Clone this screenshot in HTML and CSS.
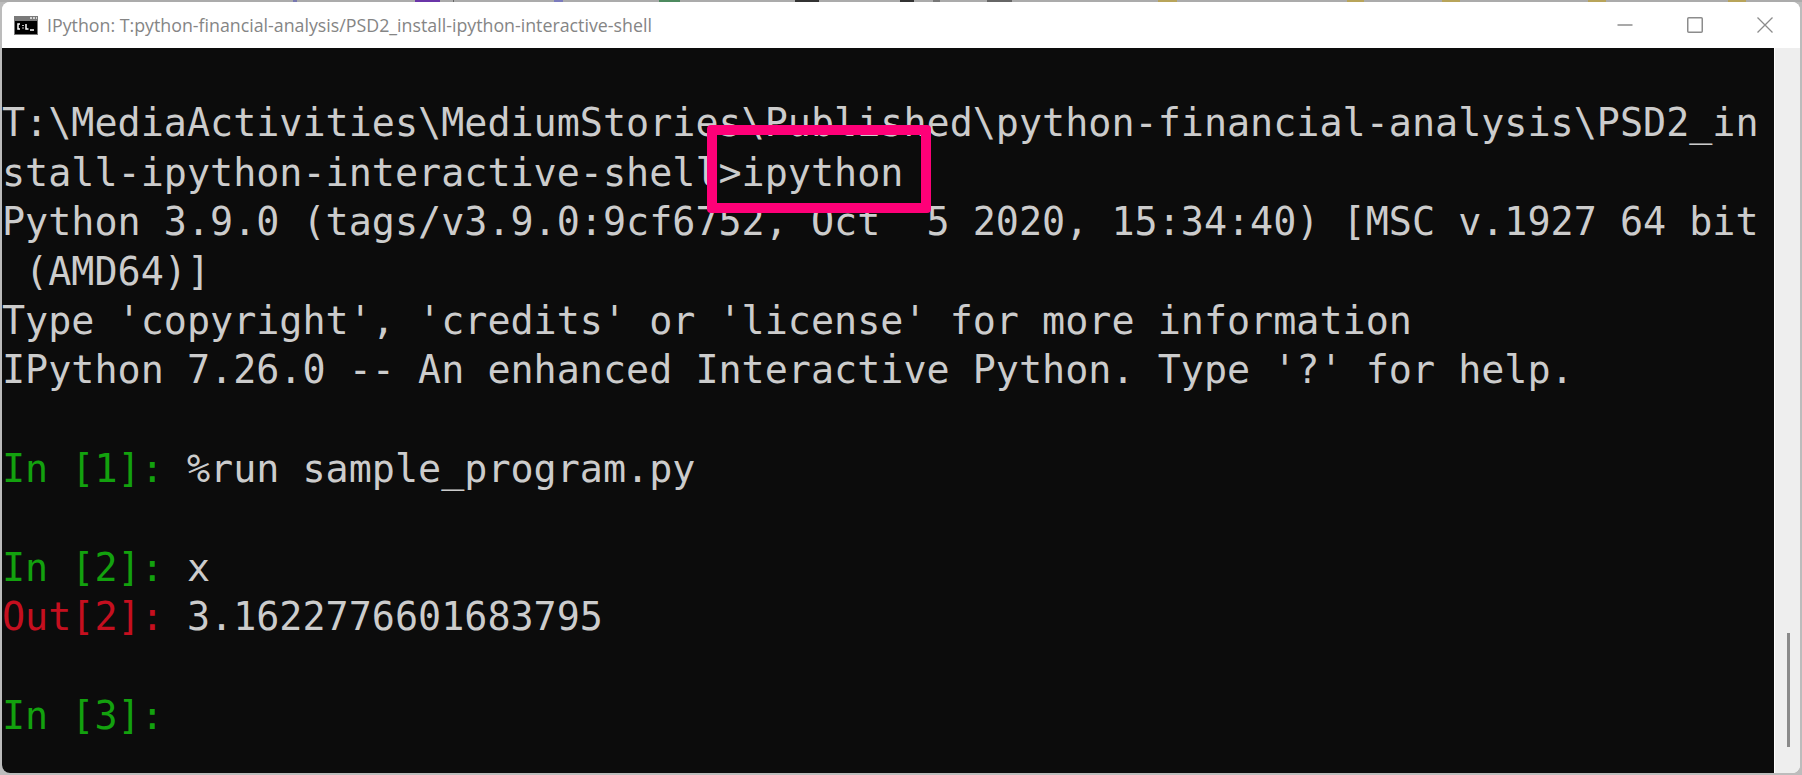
FILE: index.html
```html
<!DOCTYPE html>
<html lang="en">
<head>
<meta charset="utf-8">
<title>IPython</title>
<link rel="stylesheet" href="styles.css">
</head>
<body>
<div class="desktop">
  <div class="strip"></div>
  <div class="window">
    <header class="titlebar">
      <svg class="appicon" width="24" height="19" viewBox="0 0 24 19">
        <rect x="0" y="0" width="24" height="19" fill="#7a7a7a"/>
        <rect x="16" y="1" width="2" height="2" fill="#d0d0d0"/><rect x="19" y="1" width="2" height="2" fill="#d0d0d0"/><rect x="22" y="1" width="1" height="2" fill="#d0d0d0"/>
        <rect x="1" y="5" width="22" height="13" fill="#000"/>
        <path d="M6 8H4V13H6M9 9V9.9M9 11.6V12.5M12 8V13H14.500M16 14H20" fill="none" stroke="#fff" stroke-width="1.500"/>
      </svg>
      <span class="wintitle">IPython: T:python-financial-analysis/PSD2_install-ipython-interactive-shell</span>
      <div class="controls">
        <svg class="ctl" width="16" height="16" viewBox="0 0 16 16"><path d="M0.500 8H15.500" stroke="#8c8c8c" stroke-width="1.500" fill="none"/></svg>
        <svg class="ctl" width="16" height="16" viewBox="0 0 16 16"><rect x="0.750" y="0.750" width="14.500" height="14.500" rx="1" stroke="#8c8c8c" stroke-width="1.500" fill="none"/></svg>
        <svg class="ctl" width="16" height="16" viewBox="0 0 16 16"><path d="M0.500 0.500L15.500 15.500M15.500 0.500L0.500 15.500" stroke="#8c8c8c" stroke-width="1.300" fill="none"/></svg>
      </div>
    </header>
    <div class="body">
      <main class="term">
        <div class="row">&nbsp;</div>
        <div class="row">T:\MediaActivities\MediumStories\Published\python-financial-analysis\PSD2_in</div>
        <div class="row">stall-ipython-interactive-shell&gt;ipython</div>
        <div class="row">Python 3.9.0 (tags/v3.9.0:9cf6752, Oct  5 2020, 15:34:40) [MSC v.1927 64 bit</div>
        <div class="row"> (AMD64)]</div>
        <div class="row">Type 'copyright', 'credits' or 'license' for more information</div>
        <div class="row">IPython 7.26.0 -- An enhanced Interactive Python. Type '?' for help.</div>
        <div class="row">&nbsp;</div>
        <div class="row"><span class="in">In [1]: </span>%run sample_program.py</div>
        <div class="row">&nbsp;</div>
        <div class="row"><span class="in">In [2]: </span>x</div>
        <div class="row"><span class="out">Out[2]: </span>3.1622776601683795</div>
        <div class="row">&nbsp;</div>
        <div class="row"><span class="in">In [3]: </span></div>
      </main>
      <aside class="scroll"><div class="thumb"></div></aside>
    </div>
  </div>
  <div class="callout"></div>
</div>
</body>
</html>
```
FILE: styles.css
```css
html, body { margin: 0; padding: 0; height: 100%; overflow: hidden; background: #b4b4b4; }
.desktop { position: relative; width: 1802px; height: 775px; display: flex; flex-direction: column; background: #bcbcbc; }
.strip {
  height: 2px;
  flex: none;
  background: linear-gradient(90deg,
    #ababab 293px, #7878b0 293px, #7878b0 297px,
    #ababab 297px, #ababab 415px, #6a35a8 415px, #6a35a8 440px,
    #ababab 440px, #ababab 453px, #666 453px, #666 454px,
    #ababab 454px, #ababab 554px, #7b7bbd 554px, #7b7bbd 563px,
    #ababab 563px, #ababab 659px, #4e8a5f 659px, #4e8a5f 680px,
    #ababab 680px, #ababab 795px, #333 795px, #333 819px,
    #ababab 819px, #ababab 900px, #333 900px, #333 914px,
    #ababab 914px, #ababab 933px, #777 933px, #777 940px,
    #ababab 940px, #ababab 987px, #666 987px, #666 1012px,
    #ababab 1012px, #ababab 1158px, #b8a45a 1158px, #b8a45a 1177px,
    #ababab 1177px, #ababab 1347px, #b8a45a 1347px, #b8a45a 1364px,
    #ababab 1364px, #ababab 1442px, #b8a45a 1442px, #b8a45a 1460px,
    #ababab 1460px, #ababab 1588px, #b8a45a 1588px, #b8a45a 1606px,
    #ababab 1606px, #ababab 1728px, #b8a45a 1728px, #b8a45a 1746px,
    #ababab 1746px);
}
.window { flex: 1; min-height: 0; margin: 0 2px 2px 2px; background: #fff; border-radius: 8px; overflow: hidden; display: flex; flex-direction: column; }
.titlebar { height: 46px; flex: none; display: flex; align-items: center; padding: 0 0 0 12px; background: #fff; }
.appicon { flex: none; margin-right: 9px; }
.wintitle { font: 17.800px "Open Sans", "Liberation Sans", sans-serif; color: #858585; white-space: nowrap; }
.controls { margin-left: auto; display: flex; gap: 54px; padding-right: 27px; align-items: center; }
.ctl { display: block; }
.body { flex: 1; display: flex; min-height: 0; }
.term { flex: 1; min-width: 0; background: #0c0c0c; color: #cccccc; font-family: "DejaVu Sans Mono", monospace; font-size: 38.400px; overflow: hidden; padding-top: 1px; }
.row { height: 49.400px; line-height: 49.400px; white-space: pre; }
.in { color: #13a10e; }
.out { color: #c50f1f; }
.scroll { width: 25px; flex: none; margin-left: 1px; background: #eeeeee; position: relative; }
.thumb { position: absolute; right: 10px; bottom: 26px; width: 3px; height: 114px; background: #8a8a8a; }
.callout { position: absolute; left: 707px; top: 125px; width: 224px; height: 88px; box-sizing: border-box; border: 10px solid #ff0078; border-radius: 4px; }
```
